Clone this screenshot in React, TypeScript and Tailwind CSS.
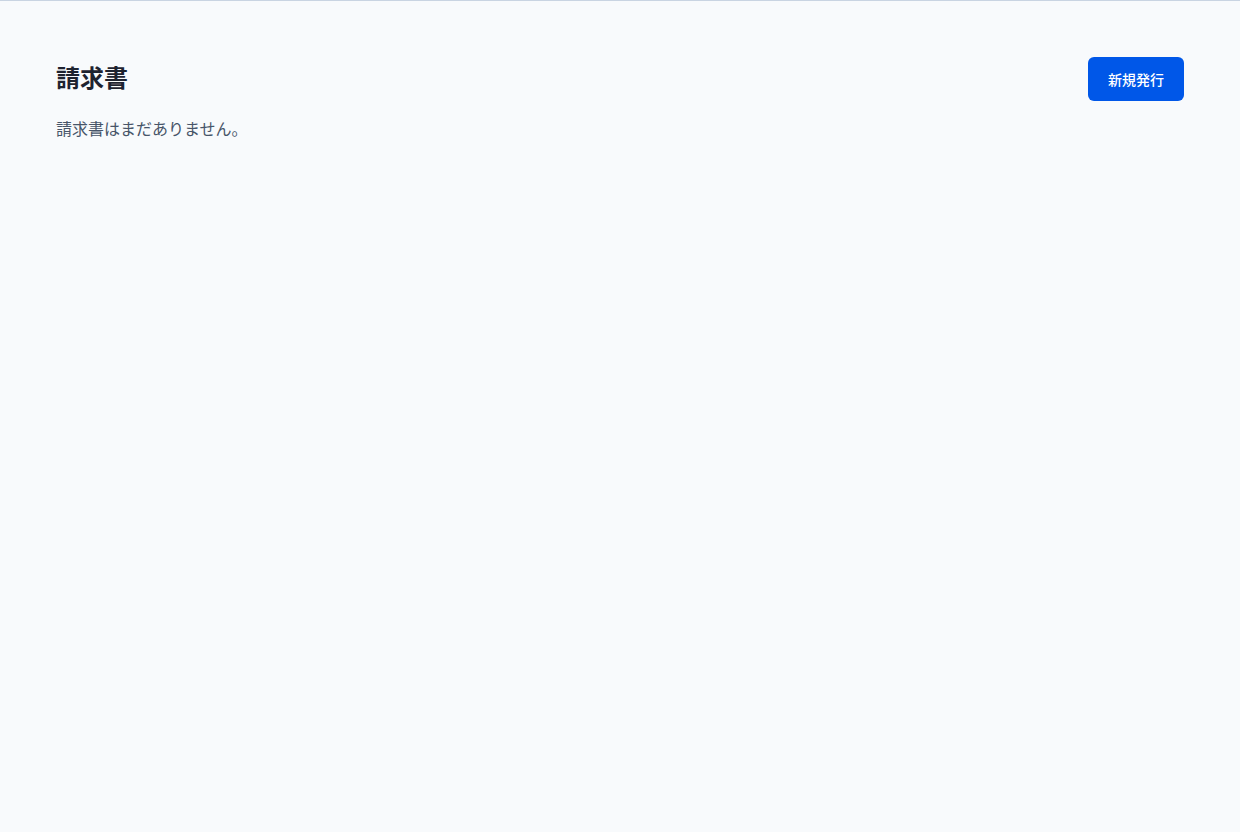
export default function App() {
  return (
    <div
      className="min-h-[832px] w-full bg-[#f8fafc] border-t border-[#c9d4e2] px-14 pt-14"
      style={{ fontFamily: '"Noto Sans CJK JP", "Noto Sans", sans-serif' }}
    >
      <div className="flex items-center justify-between">
        <h1 className="mb-1 text-[24px] font-bold text-[#1e2330] leading-none">請求書</h1>
        <button className="h-11 w-24 rounded-md bg-[#0057e8] text-[14px] font-medium text-white">
          新規発行
        </button>
      </div>
      <p className="mt-4 text-[16px] leading-[22px] text-[#475569]">請求書はまだありません。</p>
    </div>
  );
}
